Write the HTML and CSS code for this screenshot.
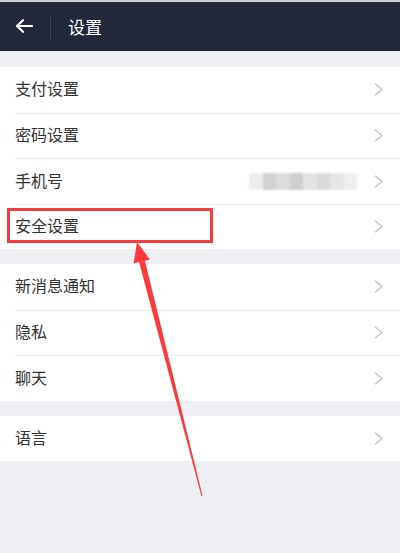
FILE: index.html
```html
<!DOCTYPE html>
<html lang="zh-CN">
<head>
<meta charset="utf-8">
<title>设置</title>
<link rel="stylesheet" href="styles.css">
</head>
<body>
<div class="screen">
  <header class="topbar">
    <button class="back" aria-label="返回">
      <svg width="18" height="14" viewBox="0 0 18 14"><path d="M17 7H2.5M8 1.2 2 7l6 5.8" fill="none" stroke="#fff" stroke-width="2.2" stroke-linecap="round" stroke-linejoin="round"/></svg>
    </button>
    <span class="sep"></span>
    <h1 class="title">设置</h1>
  </header>

  <section class="group first">
    <div class="row"><span class="label">支付设置</span><svg class="chev" viewBox="0 0 9 13"><polyline points="1,0.8 8,6.5 1,12.2"/></svg></div>
    <div class="row"><span class="label">密码设置</span><svg class="chev" viewBox="0 0 9 13"><polyline points="1,0.8 8,6.5 1,12.2"/></svg></div>
    <div class="row">
      <span class="label">手机号</span>
      <span class="masked">
        <i class="px a"></i><i class="px b"></i><i class="px c"></i><i class="px d"></i><i class="px e"></i><i class="px f"></i><i class="px g"></i><i class="px h"></i>
      </span>
      <svg class="chev" viewBox="0 0 9 13"><polyline points="1,0.8 8,6.5 1,12.2"/></svg>
    </div>
    <div class="row"><span class="label">安全设置</span><svg class="chev" viewBox="0 0 9 13"><polyline points="1,0.8 8,6.5 1,12.2"/></svg></div>
  </section>

  <section class="group">
    <div class="row"><span class="label">新消息通知</span><svg class="chev" viewBox="0 0 9 13"><polyline points="1,0.8 8,6.5 1,12.2"/></svg></div>
    <div class="row"><span class="label">隐私</span><svg class="chev" viewBox="0 0 9 13"><polyline points="1,0.8 8,6.5 1,12.2"/></svg></div>
    <div class="row"><span class="label">聊天</span><svg class="chev" viewBox="0 0 9 13"><polyline points="1,0.8 8,6.5 1,12.2"/></svg></div>
  </section>

  <section class="group">
    <div class="row"><span class="label">语言</span><svg class="chev" viewBox="0 0 9 13"><polyline points="1,0.8 8,6.5 1,12.2"/></svg></div>
  </section>

  <!-- highlight frame and pointer drawn over the list -->
  <div class="mark"></div>
  <svg class="pointer" width="400" height="553" viewBox="0 0 400 553">
    <polygon points="137,242 149.8,259.4 144.9,260.7 202.6,495.9 201.4,496.1 139.1,262.1 133.6,263.6" fill="#fb3a3c"/>
  </svg>
</div>
</body>
</html>
```

FILE: styles.css
```css
* { box-sizing: border-box; }

html, body {
  margin: 0;
  padding: 0;
  background: #eeeff3;
}

.screen {
  position: relative;
  width: 400px;
  height: 553px;
  overflow: hidden;
  font-family: "Noto Sans CJK SC", "Noto Sans", sans-serif;
  color: #333;
}

.topbar {
  height: 51px;
  border-top: 2px solid #cfd1d6;
  background: #22273a;
  display: flex;
  align-items: center;
}

.back {
  width: 50px;
  height: 100%;
  padding: 0 2px 2px 0;
  border: 0;
  background: none;
  display: flex;
  align-items: center;
  justify-content: center;
}

.sep {
  width: 1px;
  height: 24px;
  margin-top: 2px;
  background: #3a3f51;
}

.title {
  margin: 0 0 0 17px;
  font-size: 17px;
  font-weight: normal;
  color: #fff;
  line-height: 1;
  padding-bottom: 1px;
}

.group {
  background: #fff;
  margin-top: 15px;
}

.group.first {
  margin-top: 16px;
}

.row {
  height: 45.5px;
  margin-left: 15px;
  padding-right: 17px;
  display: flex;
  align-items: center;
  border-top: 1px solid #ebebee;
}

.row:first-child {
  border-top: 0;
}

.label {
  flex: 1;
  font-size: 16px;
  line-height: 1;
  padding-bottom: 3px;
}

.chev {
  width: 9px;
  height: 13px;
  fill: none;
  stroke: #c4c4c9;
  stroke-width: 1.4;
}

/* pixelated phone number */
.masked {
  display: grid;
  grid-template-columns: repeat(8, 13.5px);
  height: 17px;
  margin-right: 17px;
  filter: blur(1.2px);
}

.px { display: block; }
.px.a { background: #ededed; }
.px.b { background: #d2d2d2; }
.px.c { background: #dcdcdc; }
.px.d { background: #cfcfcf; }
.px.e { background: #e3e3e3; }
.px.f { background: #dadada; }
.px.g { background: #e6e6e6; }
.px.h { background: #efefef; }

.mark {
  position: absolute;
  left: 7px;
  top: 208px;
  width: 206px;
  height: 35px;
  border: 3px solid #f43b3e;
}

.pointer {
  position: absolute;
  left: 0;
  top: 0;
}
```
